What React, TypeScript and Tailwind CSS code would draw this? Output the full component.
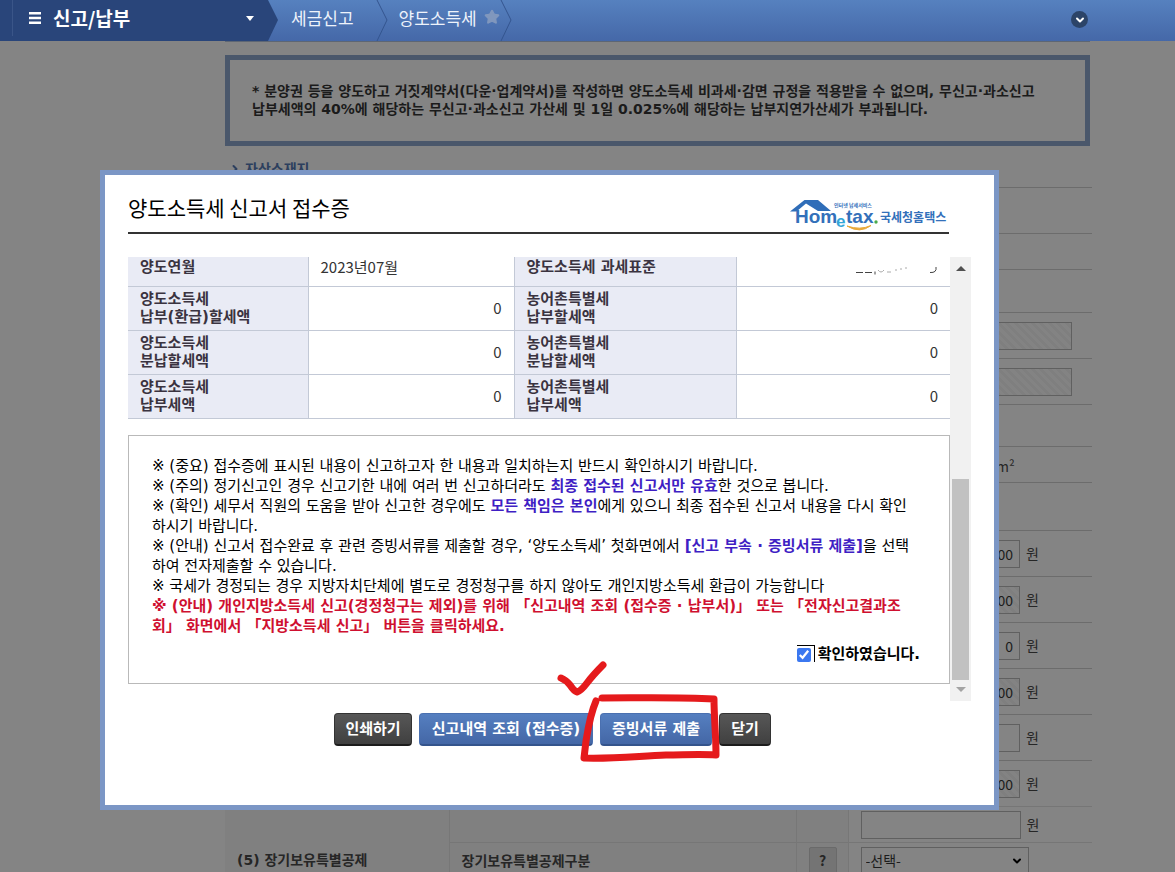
import { useState } from "react";
import { ChevronDown, ChevronRight, Star } from "lucide-react";

const receiptRows = [
    { left: ["양도소득세", "납부(환급)할세액"], right: ["농어촌특별세", "납부할세액"] },
    { left: ["양도소득세", "분납할세액"], right: ["농어촌특별세", "분납할세액"] },
    { left: ["양도소득세", "납부세액"], right: ["농어촌특별세", "납부세액"] },
];

// rows of the form behind the popup
const formRows = [
    { height: "h-[46px]", type: "empty" },
    { height: "h-9", type: "empty" },
    { height: "h-[43px]", type: "empty" },
    { height: "h-[46px]", type: "address" },
    { height: "h-[46px]", type: "address" },
    { height: "h-[42px]", type: "empty" },
    { height: "h-9", type: "area" },
    { height: "h-12", type: "empty" },
    { height: "h-[46px]", type: "money", value: "500,000,000" },
    { height: "h-[46px]", type: "money", value: "400,000,000", locked: true },
    { height: "h-[46px]", type: "money", value: "0" },
    { height: "h-[46px]", type: "money", value: "100,000,000", locked: true },
    { height: "h-[46px]", type: "money", value: "" },
    { height: "h-[46px]", type: "money", value: "100,000,000", locked: true },
];

// wide spaces and brackets between the hangul
const wideFont = "font-['DejaVu_Sans','Noto_Sans_CJK_KR',sans-serif]";

const hatch =
    "bg-[repeating-linear-gradient(45deg,#7f7f7f_0px,#7f7f7f_3px,#838383_3px,#838383_6px)]";

const MoneyField = ({ value, locked }: { value?: string; locked?: boolean }) => (
    <label className="flex items-center gap-[6px] text-[14px] text-[#262626]">
        <input
            type="text"
            defaultValue={value}
            readOnly={locked}
            className={`h-7 w-40 border border-[#606060] px-[6px] text-right text-[14px] text-[#1c1c1c] ${locked ? hatch : "bg-[#848484]"}`}
        />
        원
    </label>
);

const Header = () => (
    <header className="flex h-[41px] bg-linear-to-b from-[#5681bf] to-[#4568a8] text-white">
        <div className="flex w-[278px] shrink-0 bg-[#29457a] pl-3 [clip-path:polygon(0_0,268px_0,278px_20px,268px_100%,0_100%)]">
            <button type="button" className="flex h-9 grow items-center border-l border-[#3a5588] pl-4 text-[19px] font-bold">
                <svg viewBox="0 0 12 12" className="mr-3 h-3 w-3" fill="#fff">
                    <path d="M0 0h12v2.4H0zM0 4.8h12v2.4H0zM0 9.6h12V12H0z" />
                </svg>
                신고/납부
                <svg viewBox="0 0 8 5" className="mr-6 ml-auto h-[5px] w-2" fill="#fff">
                    <path d="M0 0h8L4 5z" />
                </svg>
            </button>
        </div>
        <nav className="flex text-[17px] text-[#eef3fb]">
            <a href="#tax" className="flex h-9 items-center pl-[13px]">세금신고</a>
            <svg viewBox="0 0 12 41" className="ml-[22px] h-[41px] w-3" fill="none" stroke="#34558f">
                <path d="M1 0l10 20L1 41" />
            </svg>
            <a href="#transfer" className="flex h-9 items-center pl-[11px]">양도소득세</a>
            <Star className="mt-[9px] ml-[7px] h-4 w-4 fill-[#8097bd] stroke-[#8097bd]" />
            <svg viewBox="0 0 12 41" className="h-[41px] w-3" fill="none" stroke="#34558f">
                <path d="M1 0l10 20L1 41" />
            </svg>
        </nav>
        <button type="button" aria-label="펼치기" className="mt-[11px] mr-[87px] ml-auto flex h-[17px] w-[17px] items-center justify-center rounded-full bg-[#2c4468]">
            <ChevronDown className="h-3 w-3" strokeWidth={4} />
        </button>
    </header>
);

const HomeTaxLogo = () => (
    <svg viewBox="0 0 160 36" className="h-9 w-40" role="img" aria-label="Hometax 국세청홈택스">
        <path d="M1 15.500 15.500 4H29l13 11H29L17 7.500 7.500 15.500z" fill="#2f6db8" />
        <text x="6" y="27" fontSize="19" fontWeight="bold" fontFamily="Liberation Sans" fill="#3370ba">Hom</text>
        <text x="47" y="31" fontSize="17" fontWeight="bold" fontFamily="Liberation Sans" fill="#35a6d8">e</text>
        <text x="57" y="27" fontSize="19" fontWeight="bold" fontFamily="Liberation Sans" fill="#3370ba">tax</text>
        <text x="45" y="11" fontSize="5" fontWeight="bold" fontFamily="Noto Sans CJK KR" fill="#3370ba">인터넷 납세서비스</text>
        <circle cx="87" cy="26" r="1.700" fill="#4aaa4b" />
        <path d="M58 30q13 8 24-.500-11 5-24 .500z" fill="#e9a93a" stroke="#e9a93a" />
        <text x="91" y="26" fontSize="12" fontWeight="bold" fontFamily="Noto Sans CJK KR" fill="#3370ba">국세청홈택스</text>
    </svg>
);

const FormPage = () => (
    <main className="ml-[225px] mr-[83px]">
        <div className="mr-[2px] h-px bg-[#5d6674]" />
        <div className={`mt-[13px] mr-[2px] h-[91px] border-5 border-[#4a576b] pt-[22px] pl-[22px] text-[14px] leading-[18px] font-bold whitespace-nowrap text-[#1b1b1b] ${wideFont}`}>
            <p>* 분양권 등을 양도하고 거짓계약서(다운·업계약서)를 작성하면 양도소득세 비과세·감면 규정을 적용받을 수 없으며, 무신고·과소신고</p>
            <p>납부세액의 40%에 해당하는 무신고·과소신고 가산세 및 1일 0.025%에 해당하는 납부지연가산세가 부과됩니다.</p>
        </div>
        <h2 className="flex h-[41px] items-center gap-1 pt-1 pl-1 text-[14px] font-bold text-[#2c3f5e]">
            <ChevronRight className="h-3 w-3" strokeWidth={4} />
            자산소재지
        </h2>
        <table className="w-full table-fixed border-collapse">
            <colgroup>
                <col className="w-56" />
                <col className="w-[347px]" />
                <col className="w-[52px]" />
                <col />
            </colgroup>
            <tbody>
                {formRows.map((row, i) => (
                    <tr key={i} className={`border-t border-[#6c6c6c] ${row.height}`}>
                        <th className="bg-[#808080]" />
                        <th className="bg-[#808080]" />
                        <th className="bg-[#808080]" />
                        <td className="py-0 pl-3">
                            {row.type === "address" && (
                                <input type="text" readOnly aria-label="주소" className={`block h-7 w-[212px] border border-[#606060] ${hatch}`} />
                            )}
                            {row.type === "area" && <p className="pt-1 pl-[136px] text-[14px] text-[#262626]">m²</p>}
                            {row.type === "money" && <MoneyField value={row.value} locked={row.locked} />}
                        </td>
                    </tr>
                ))}
                <tr className="h-9 border-t border-[#767676]">
                    <th rowSpan={2} className={`border-r border-[#777777] bg-[#808080] pb-2 pl-3 text-left align-bottom text-[14px] font-bold text-[#262626] ${wideFont}`}>
                        (5) 장기보유특별공제
                    </th>
                    <th className="border-r border-[#777777] bg-[#808080]" />
                    <th className="border-r border-[#777777] bg-[#808080]" />
                    <td className="py-0 pl-3">
                        <MoneyField value="" />
                    </td>
                </tr>
                <tr className="h-9 border-t border-[#767676]">
                    <th className="border-r border-[#777777] bg-[#808080] pl-3 text-left text-[14px] font-bold text-[#262626]">
                        장기보유특별공제구분
                    </th>
                    <th className="border-r border-[#777777] bg-[#808080] pl-3 text-left">
                        <button type="button" className="block h-7 w-7 rounded-xs border border-[#6a6a6a] bg-[#747474] text-[14px] font-bold text-[#262626]">?</button>
                    </th>
                    <td className="py-0 pl-3">
                        <div className="relative w-[168px]">
                            <select aria-label="장기보유특별공제구분" className="block h-7 w-full appearance-none border border-[#606060] bg-[#848484] px-1 text-[14px] text-[#1c1c1c]">
                                <option>-선택-</option>
                            </select>
                            <ChevronDown className="pointer-events-none absolute top-2 right-1 h-3 w-4 text-black" strokeWidth={4} />
                        </div>
                    </td>
                </tr>
            </tbody>
        </table>
    </main>
);

const labelCell = `border-r border-[#c3c9d6] bg-[#e9ebf5] pl-3 text-left font-bold text-[#3a3340] ${wideFont}`;

const ReceiptTable = () => (
    <table className="w-full table-fixed border-collapse text-[15px] leading-[18px] text-[#333]">
        <colgroup>
            <col className="w-[180px]" />
            <col className="w-[206px]" />
            <col className="w-[222px]" />
            <col />
        </colgroup>
        <tbody>
            <tr className="h-[29px] border-b border-[#c3c9d6]">
                <th className={`${labelCell} pb-2`}>양도연월</th>
                <td className="border-r border-[#c3c9d6] pb-2 pl-3">2023년07월</td>
                <th className={`${labelCell} pb-2`}>양도소득세 과세표준</th>
                <td className="pr-3">
                    {/* amount is wiped out, only the feet of the digits remain */}
                    <svg viewBox="0 0 84 8" className="ml-auto h-2 w-[84px]" fill="none" stroke="#444">
                        <path d="M2 5.500h7m2 0h7m3-1v3" />
                        <path d="M24 3q3 4 6 0m3 2h4m4-2h2m3-1h2m3-1h2" stroke="#aaa" />
                        <path d="M82 0q1 6-6 5.500" />
                    </svg>
                </td>
            </tr>
            {receiptRows.map((row, i) => (
                <tr key={i} className="h-11 border-b border-[#c3c9d6]">
                    <th className={labelCell}>{row.left[0]}<br />{row.left[1]}</th>
                    <td className="border-r border-[#c3c9d6] pr-3 text-right">0</td>
                    <th className={labelCell}>{row.right[0]}<br />{row.right[1]}</th>
                    <td className="pr-3 text-right">0</td>
                </tr>
            ))}
        </tbody>
    </table>
);

const Notice = () => {
    const [checked, setChecked] = useState(true);

    return (
        <div className={`mt-4 h-[249px] border border-[#b9b9b9] pt-5 pr-[29px] pl-[23px] text-[15px] leading-5 whitespace-nowrap text-black ${wideFont}`}>
            <p>※ (중요) 접수증에 표시된 내용이 신고하고자 한 내용과 일치하는지 반드시 확인하시기 바랍니다.</p>
            <p>※ (주의) 정기신고인 경우 신고기한 내에 여러 번 신고하더라도 <b className="text-[#3f1fc4]">최종 접수된 신고서만 유효</b>한 것으로 봅니다.</p>
            <p>
                ※ (확인) 세무서 직원의 도움을 받아 신고한 경우에도 <b className="text-[#3f1fc4]">모든 책임은 본인</b>에게 있으니 최종 접수된 신고서 내용을 다시 확인
                <br />하시기 바랍니다.
            </p>
            <p>
                ※ (안내) 신고서 접수완료 후 관련 증빙서류를 제출할 경우, ‘양도소득세’ 첫화면에서 <b className="text-[#3f1fc4]">[신고 부속 · 증빙서류 제출]</b>을 선택
                <br />하여 전자제출할 수 있습니다.
            </p>
            <p>※ 국세가 경정되는 경우 지방자치단체에 별도로 경정청구를 하지 않아도 개인지방소득세 환급이 가능합니다</p>
            <p className="font-bold text-[#cf1030]">
                ※ (안내) 개인지방소득세 신고(경정청구는 제외)를 위해 「신고내역 조회 (접수증 · 납부서)」 또는 「전자신고결과조
                <br />회」 화면에서 「지방소득세 신고」 버튼을 클릭하세요.
            </p>
            <label className="mt-2 flex items-center justify-end gap-[3px] font-bold">
                <span className="flex border-t border-r border-black pt-[2px] pr-[3px]">
                    <input
                        type="checkbox"
                        checked={checked}
                        onChange={(e) => setChecked(e.target.checked)}
                        className="h-[14px] w-[14px] accent-[#3b78f0]"
                    />
                </span>
                확인하였습니다.
            </label>
        </div>
    );
};

const ScrollBar = () => (
    <div className="flex w-[21px] shrink-0 flex-col items-center bg-[#f1f1f1]">
        <svg viewBox="0 0 10 5" className="mt-[9px] h-[5px] w-[10px]" fill="#505050">
            <path d="M0 5 5 0l5 5z" />
        </svg>
        <div className="mt-auto h-[201px] w-[17px] bg-[#c1c1c1]" />
        <svg viewBox="0 0 10 5" className="mt-[7px] mb-[9px] h-[5px] w-[10px]" fill="#a3a3a3">
            <path d="M0 0h10L5 5z" />
        </svg>
    </div>
);

const darkButton = "border-[#333] border-b-[#1c1c1c] bg-linear-to-b from-[#575757] to-[#404040]";
const blueButton = "border-[#4a70b0] border-b-[#34548c] bg-linear-to-b from-[#557fc0] to-[#4467a6]";
const baseButton = `h-[33px] rounded-sm border border-b-2 text-[15px] font-bold whitespace-nowrap text-white ${wideFont}`;

const ReceiptDialog = () => (
    <section role="dialog" aria-labelledby="receipt-title" className="absolute inset-x-0 top-[170px] mr-44 ml-[100px] h-[640px] border-5 border-[#7b96c5] bg-white pr-[23px] pl-[23px]">
        <div className="mr-[22px] flex h-[59px] items-end justify-between border-b-2 border-[#333]">
            <h1 id="receipt-title" className="pb-[10px] text-[21px] leading-[30px] text-black">양도소득세 신고서 접수증</h1>
            <HomeTaxLogo />
        </div>
        <div className="mt-[23px] flex">
            <div className="h-[444px] min-w-0 grow">
                <ReceiptTable />
                <Notice />
            </div>
            <ScrollBar />
        </div>
        <div className="mt-3 flex justify-center gap-[7px] pl-[6px]">
            <button type="button" className={`${baseButton} ${darkButton} w-[78px]`}>인쇄하기</button>
            <button type="button" className={`${baseButton} ${blueButton} w-[174px]`}>신고내역 조회 (접수증)</button>
            <button type="button" className={`${baseButton} ${blueButton} w-28`}>증빙서류 제출</button>
            <button type="button" className={`${baseButton} ${darkButton} w-[52px]`}>닫기</button>
        </div>
        {/* hand drawn marker */}
        <svg viewBox="550 655 180 115" className="pointer-events-none absolute top-[480px] left-[445px] h-[115px] w-[180px]" fill="none" stroke="#e51a1c" strokeWidth="7" strokeLinecap="round" strokeLinejoin="round">
            <path d="M561 678q5 2 9 7 4 6 7 7 4-1 10-9 6-8 16-18" />
            <path d="M596 701c-6 14-8 28-10 40l-2 17c28 1 55-2 82-3 17 0 33-1 50 0 0-19-2-38-2-56-37-2-74-1-112-1" />
        </svg>
    </section>
);

const App = () => {
    return (
        <div className="relative h-screen overflow-hidden bg-[#848484] font-['Noto_Sans_CJK_KR',sans-serif]">
            <Header />
            <FormPage />
            <ReceiptDialog />
        </div>
    );
};

export default App;
